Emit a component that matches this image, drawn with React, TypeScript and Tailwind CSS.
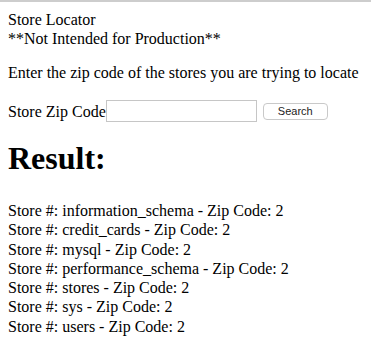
const stores = [
  'information_schema',
  'credit_cards',
  'mysql',
  'performance_schema',
  'stores',
  'sys',
  'users',
];

export default function App() {
  return (
    <div className="min-h-[362px] w-full bg-white border-t-2 border-[#cdcdcd] text-black font-['Liberation_Serif','Times_New_Roman',serif] text-[16px] leading-[19px]">
      <div className="px-2 pt-2">
        <div>Store Locator</div>
        <div>**Not Intended for Production**</div>
        <p className="mt-[15px]">Enter the zip code of the stores you are trying to locate</p>
        <form className="mt-[18px] flex items-center h-[22px]" onSubmit={(e) => e.preventDefault()}>
          <label htmlFor="zip">Store Zip Code</label>
          <input
            id="zip"
            type="text"
            className="h-[22px] w-[151px] border border-[#c6c6c6] bg-white px-1 outline-none"
          />
          <button
            type="submit"
            className="ml-[6px] h-[17px] w-[65px] rounded-[4px] border border-[#c9c9c9] bg-white font-['Liberation_Sans',Arial,sans-serif] text-[11px] leading-[15px] text-[#222]"
          >
            Search
          </button>
        </form>
        <h1 className="mt-[18px] text-[32px] font-bold leading-[37px]">Result:</h1>
        <div className="mt-[24px]">
          {stores.map((s) => (
            <div key={s} className="leading-[19.3px]">
              Store #: {s} - Zip Code: 2
            </div>
          ))}
        </div>
      </div>
    </div>
  );
}
